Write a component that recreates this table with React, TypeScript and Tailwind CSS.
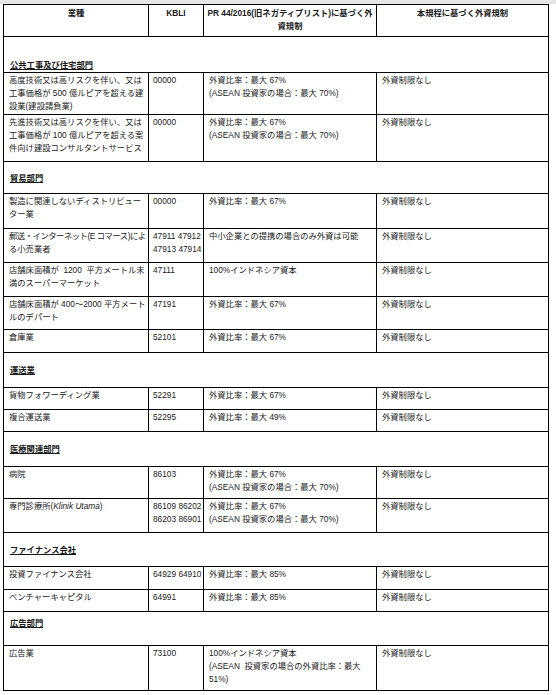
import React from "react";

type Section = { kind: "section"; title: string; h: number; pt: string };
type Data = {
  kind: "data";
  c1: React.ReactNode;
  c2: React.ReactNode;
  c3: React.ReactNode;
  h: number;
};
type Row = Section | Data;

const L = ({ children }: { children: React.ReactNode }) => (
  <div className="whitespace-nowrap">{children}</div>
);

const r67 = <L>外資比率：最大 67%</L>;
const r67a = (
  <>
    <L>外資比率：最大 67%</L>
    <L>(ASEAN 投資家の場合：最大 70%)</L>
  </>
);

const rows: Row[] = [
  { kind: "section", title: "公共工事及び住宅部門", h: 36, pt: "pt-[22px]" },
  {
    kind: "data",
    h: 42,
    c1: (
      <>
        <L>高度技術又は高リスクを伴い、又は</L>
        <L>工事価格が 500 億ルピアを超える建</L>
        <L>設業(建設請負業)</L>
      </>
    ),
    c2: "00000",
    c3: r67a,
  },
  {
    kind: "data",
    h: 47,
    c1: (
      <>
        <L>先進技術又は高リスクを伴い、又は</L>
        <L>工事価格が 100 億ルピアを超える案</L>
        <L>件向け建設コンサルタントサービス</L>
      </>
    ),
    c2: "00000",
    c3: r67a,
  },
  { kind: "section", title: "貿易部門", h: 32, pt: "pt-[10px]" },
  {
    kind: "data",
    h: 35,
    c1: (
      <>
        <L>製造に関連しないディストリビュー</L>
        <L>ター業</L>
      </>
    ),
    c2: "00000",
    c3: r67,
  },
  {
    kind: "data",
    h: 34,
    c1: (
      <>
        <div className="whitespace-nowrap tracking-[-0.45px]">
          郵送・インターネット(E コマース)によ
        </div>
        <L>る小売業者</L>
      </>
    ),
    c2: (
      <>
        <L>47911 47912</L>
        <L>47913 47914</L>
      </>
    ),
    c3: <L>中小企業との提携の場合のみ外資は可能</L>,
  },
  {
    kind: "data",
    h: 34,
    c1: (
      <>
        <L>
          店舗床面積が&nbsp;&nbsp;1200&nbsp;&nbsp;平方メートル未
        </L>
        <L>満のスーパーマーケット</L>
      </>
    ),
    c2: "47111",
    c3: <L>100%インドネシア資本</L>,
  },
  {
    kind: "data",
    h: 33,
    c1: (
      <>
        <L>店舗床面積が 400～2000 平方メート</L>
        <L>ルのデパート</L>
      </>
    ),
    c2: "47191",
    c3: r67,
  },
  { kind: "data", h: 23, c1: <L>倉庫業</L>, c2: "52101", c3: r67 },
  { kind: "section", title: "運送業", h: 35, pt: "pt-[11px]" },
  {
    kind: "data",
    h: 22,
    c1: <L>貨物フォワーディング業</L>,
    c2: "52291",
    c3: r67,
  },
  {
    kind: "data",
    h: 22,
    c1: <L>複合運送業</L>,
    c2: "52295",
    c3: <L>外資比率：最大 49%</L>,
  },
  { kind: "section", title: "医療関連部門", h: 35, pt: "pt-[11px]" },
  { kind: "data", h: 32, c1: <L>病院</L>, c2: "86103", c3: r67a },
  {
    kind: "data",
    h: 34,
    c1: (
      <L>
        専門診療所(<span className="italic">Klinik Utama</span>)
      </L>
    ),
    c2: (
      <>
        <L>86109 86202</L>
        <L>86203 86901</L>
      </>
    ),
    c3: r67a,
  },
  { kind: "section", title: "ファイナンス会社", h: 34, pt: "pt-[11px]" },
  {
    kind: "data",
    h: 23,
    c1: <L>投資ファイナンス会社</L>,
    c2: "64929 64910",
    c3: <L>外資比率：最大 85%</L>,
  },
  {
    kind: "data",
    h: 22,
    c1: <L>ベンチャーキャピタル</L>,
    c2: "64991",
    c3: <L>外資比率：最大 85%</L>,
  },
  { kind: "section", title: "広告部門", h: 34, pt: "pt-[5px]" },
  {
    kind: "data",
    h: 45,
    c1: <L>広告業</L>,
    c2: "73100",
    c3: (
      <>
        <L>100%インドネシア資本</L>
        <L>(ASEAN&nbsp;&nbsp;投資家の場合の外資比率：最大</L>
        <L>51%)</L>
      </>
    ),
  },
];

export default function App() {
  return (
    <div className="min-h-screen bg-white text-[#1a1a1a] font-['Liberation_Sans','Noto_Sans_CJK_JP',sans-serif] text-[8.3px] leading-[13px]">
      <div className="h-[4px] bg-[#e6e6e6]" />
      <table className="ml-[3px] w-[545px] table-fixed border-collapse">
        <colgroup>
          <col className="w-[145px]" />
          <col className="w-[55px]" />
          <col className="w-[173px]" />
          <col className="w-[172px]" />
        </colgroup>
        <thead>
          <tr className="h-[32px] font-bold">
            <th className="border border-black align-top pt-[2px] text-center font-bold">
              業種
            </th>
            <th className="border border-black align-top pt-[2px] text-center font-bold">
              KBLI
            </th>
            <th className="border border-black align-top pt-[2px] text-center font-bold">
              <L>PR 44/2016(旧ネガティブリスト)に基づく外</L>
              <L>資規制</L>
            </th>
            <th className="border border-black align-top pt-[2px] text-center font-bold">
              本規程に基づく外資規制
            </th>
          </tr>
        </thead>
        <tbody>
          {rows.map((r, i) =>
            r.kind === "section" ? (
              <tr key={i} style={{ height: r.h }}>
                <td
                  colSpan={4}
                  className={`border border-black align-top pl-[6px] ${r.pt}`}
                >
                  <span className="font-bold underline">{r.title}</span>
                </td>
              </tr>
            ) : (
              <tr key={i} style={{ height: r.h }}>
                <td className="border border-black align-top pl-[5px] pt-[1px]">
                  {r.c1}
                </td>
                <td className="border border-black align-top pl-[4px] pt-[1px]">
                  {r.c2}
                </td>
                <td className="border border-black align-top pl-[5px] pt-[1px]">
                  {r.c3}
                </td>
                <td className="border border-black align-top pl-[5px] pt-[1px]">
                  <L>外資制限なし</L>
                </td>
              </tr>
            )
          )}
        </tbody>
      </table>
    </div>
  );
}
